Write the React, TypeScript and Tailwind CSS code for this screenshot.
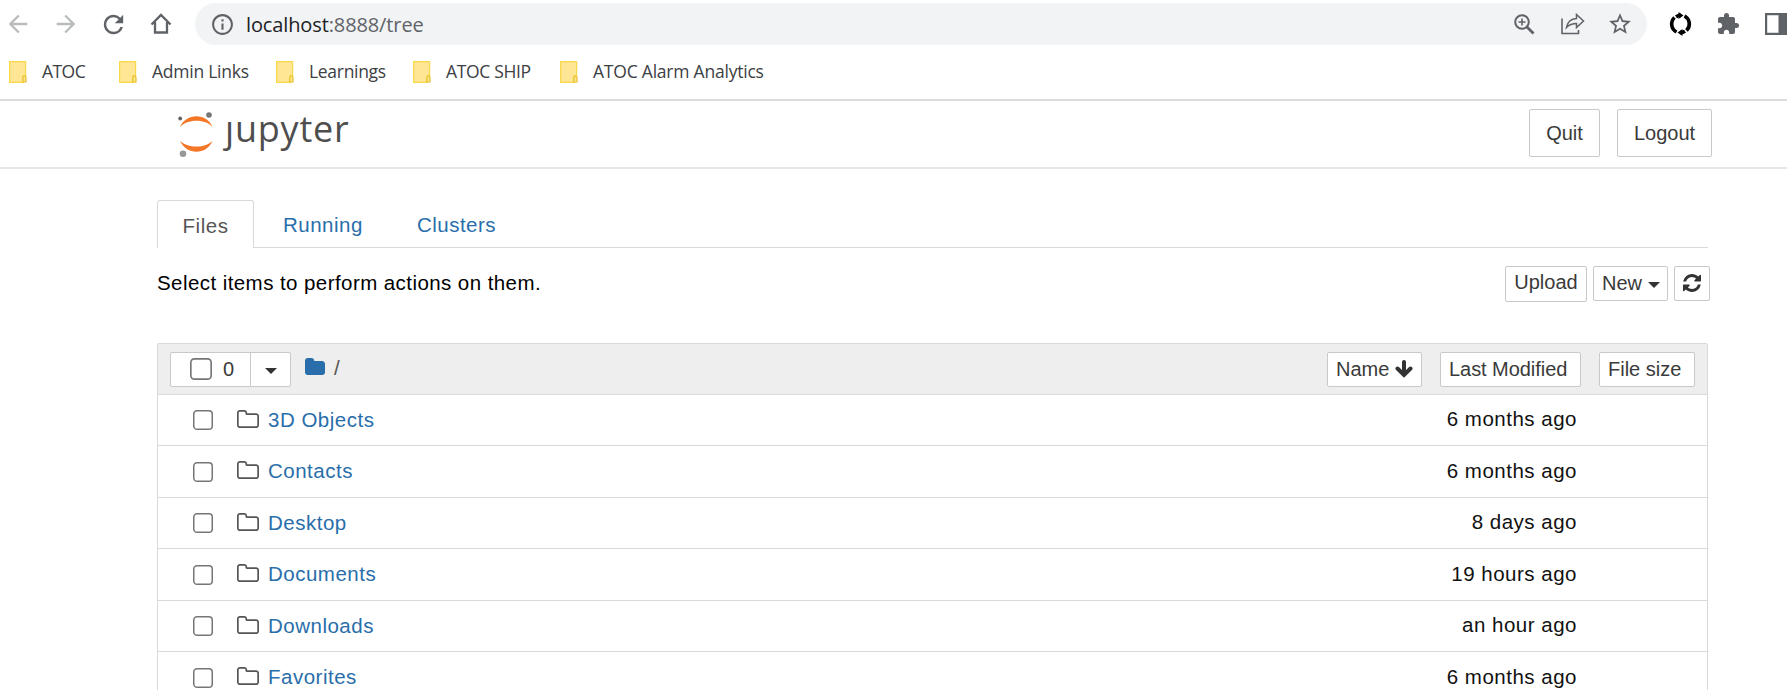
import type { ReactNode } from "react";
import { MdArrowBack, MdArrowForward, MdExtension, MdInfoOutline, MdRefresh, MdStarOutline } from "react-icons/md";

const FOLDER =
  "M1664 608v704q0 92-66 158t-158 66h-1216q-92 0-158-66t-66-158v-960q0-92 66-158t158-66h320q92 0 158 66t66 158v32h672q92 0 158 66t66 158z";
const FOLDER_O =
  "M1536 1312v-704q0-40-28-68t-68-28h-704q-40 0-68-28t-28-68v-64q0-40-28-68t-68-28h-320q-40 0-68 28t-28 68v960q0 40 28 68t68 28h1216q40 0 68-28t28-68zm128-704v704q0 92-66 158t-158 66h-1216q-92 0-158-66t-66-158v-960q0-92 66-158t158-66h320q92 0 158 66t66 158v32h672q92 0 158 66t66 158z";
const REFRESH =
  "M1639 1056q0 5-1 7-64 268-268 434.5t-478 166.5q-146 0-282.5-55t-243.5-157l-129 129q-19 19-45 19t-45-19-19-45v-448q0-26 19-45t45-19h448q26 0 45 19t19 45-19 45l-137 137q71 66 161 102t187 36q134 0 250-65t186-179q11-17 53-117 8-23 30-23h192q13 0 22.5 9.5t9.5 22.5zm25-800v448q0 26-19 45t-45 19h-448q-26 0-45-19t-19-45 19-45l138-138q-148-137-349-137-134 0-250 65t-186 179q-11 17-53 117-8 23-30 23h-199q-13 0-22.5-9.5t-9.5-22.5v-7q65-268 270-434.5t480-166.5q146 0 284 55.5t245 156.5l130-129q19-19 45-19t45 19 19 45z";

const bookmarks = [
  { label: "ATOC", box: "w-[110px]", text: "tracking-[-0.55px]" },
  { label: "Admin Links", box: "w-[157px]", text: "tracking-[-0.25px]" },
  { label: "Learnings", box: "w-[137px]", text: "tracking-[-0.3px]" },
  { label: "ATOC SHIP", box: "w-[147px]", text: "tracking-[-0.35px]" },
  { label: "ATOC Alarm Analytics", box: "w-[220px]", text: "tracking-[-0.22px]" },
];

const files = [
  { name: "3D Objects", modified: "6 months ago", h: "h-[51px]" },
  { name: "Contacts", modified: "6 months ago", h: "h-[52px]" },
  { name: "Desktop", modified: "8 days ago", h: "h-[51px]" },
  { name: "Documents", modified: "19 hours ago", h: "h-[52px]" },
  { name: "Downloads", modified: "an hour ago", h: "h-[51px]" },
  { name: "Favorites", modified: "6 months ago", h: "h-[52px]" },
];

function BookmarkIcon() {
  return (
    <svg className="h-[22px] w-[18px] shrink-0" viewBox="0 0 18 22">
      <path d="M.6.6h16v14.2h-2.200v6.600H.6z" fill="#ffe694" stroke="#fbd84b" strokeWidth="1.2" />
      <path d="M13.800 21V16.400q0-1.600 1.600-1.600t1.600 1.600V21z" fill="#fde68a" stroke="#e9c02c" strokeWidth="1.2" />
    </svg>
  );
}

function Button({ className, children }: { className: string; children: ReactNode }) {
  return (
    <button className={`flex shrink-0 items-center whitespace-nowrap rounded-[2px] border border-[#c9c9c9] bg-white text-[20px] leading-none text-[#3a3a3a] ${className}`}>
      {children}
    </button>
  );
}

function Caret() {
  return (
    <svg className="h-[6px] w-[12px]" viewBox="0 0 12 6">
      <path d="M0 0h12L6 6z" fill="#333" />
    </svg>
  );
}

function Checkbox({ className }: { className: string }) {
  return (
    <svg className={`shrink-0 ${className}`} viewBox="0 0 20 20">
      <rect x="0.75" y="0.75" width="18.500" height="18.500" rx="3.300" fill="#fff" stroke="#767676" strokeWidth="1.500" />
    </svg>
  );
}

function Toolbar() {
  return (
    <div className="flex h-[48px] shrink-0 items-start pl-[5px] pt-[3px] text-[#5f6368]">
      <div className="flex h-[42px] w-[190px] shrink-0 items-center">
        <MdArrowBack className="-ml-px size-[28px] text-[#b9bbbd]" />
        <MdArrowForward className="ml-[20px] size-[28px] text-[#b9bbbd]" />
        <MdRefresh className="ml-[19px] size-[29px]" />
        <svg className="ml-[22px] size-[22px]" viewBox="0 0 22 22">
          <path d="M1.500 11.500 11 2l9.500 9.500M5 9v10.500h12V9" fill="none" stroke="currentColor" strokeWidth="2.300" />
        </svg>
      </div>
      <div className="flex h-[42px] w-[1452px] shrink-0 items-center rounded-full bg-[#f1f3f4] pl-[15px]">
        <MdInfoOutline className="size-[25px]" />
        <span className="ml-[11px] whitespace-nowrap pt-[1px] font-['Open_Sans',sans-serif] text-[20px] tracking-[-0.12px] text-[#5f6368]">
          <span className="text-[#202124]">localhost</span>:8888/tree
        </span>
        <span className="grow" />
        <svg className="mr-[2px] size-[21px]" viewBox="0 0 21 21">
          <circle cx="8" cy="8" r="6.800" fill="none" stroke="currentColor" strokeWidth="2" />
          <path d="M4.500 8h7M8 4.500v7" stroke="currentColor" strokeWidth="1.600" />
          <path d="M13 13l6.500 6.500" stroke="currentColor" strokeWidth="2.800" />
        </svg>
        <svg className="ml-[24px] h-[22px] w-[24px]" viewBox="0 0 24 22">
          <path d="M1 5.500V20.500H17.500V17" fill="none" stroke="currentColor" strokeWidth="1.600" />
          <path d="M15.500 1.500 22.500 8l-7 6.500v-4Q9.500 10.500 5.500 14.500 7 6 15.500 5.500z" fill="none" stroke="currentColor" strokeWidth="1.500" />
        </svg>
        <MdStarOutline className="ml-[22px] mr-[14px] size-[26px]" />
      </div>
      <div className="flex h-[42px] shrink-0 items-center">
        <svg className="ml-[22px] h-[24px] w-[23px]" viewBox="0 0 23 24">
          <path d="M7.500 20A9 9 0 0 1 5.500 5.500M7 4.700q2-1.300 5-1.300M15.500 4A9 9 0 0 1 17.500 18.500M16 19.300q-2 1.300-5 1.300" fill="none" stroke="#000" strokeWidth="3.600" />
          <path d="M9.500 0 14.500 3.500 9.500 7zM13.500 17v7L8.500 20.500z" fill="#000" />
        </svg>
        <MdExtension className="ml-[24px] size-[24px]" />
        <svg className="ml-[25px] h-[22px] w-[25px] shrink-0" viewBox="0 0 25 22">
          <path d="M1 1h23v20H1z" fill="#fff" stroke="#5f6368" strokeWidth="2.400" />
          <path d="M13.500 1H24v20H13.500z" fill="#5f6368" />
        </svg>
      </div>
    </div>
  );
}

function JupyterLogo() {
  return (
    <div className="flex h-[54px] items-start">
      <svg className="h-[48px] w-[36px]" viewBox="0 0 36 48">
        <path d="M2 18C8 3.500 29 3.500 34.500 18 28 9.500 9 9.500 2 18z" fill="#f37726" />
        <path d="M2 31.500C8 46.500 29 46.500 34.500 31.500 28 39.500 9 39.500 2 31.500z" fill="#f37726" />
        <circle cx="31" cy="6" r="2.800" fill="#767677" />
        <circle cx="2.200" cy="9.500" r="1.900" fill="#616262" />
        <circle cx="5" cy="44.700" r="3.300" fill="#989798" />
      </svg>
      <span className="ml-[11px] mt-[-4px] font-['Open_Sans',sans-serif] text-[36px] leading-[48px] tracking-[0.8px] text-[#4e4e4e]">ȷupyter</span>
    </div>
  );
}

export default function App() {
  return (
    <div className="flex h-[690px] w-[1787px] flex-col overflow-hidden bg-white font-['Liberation_Sans',Arial,sans-serif]">
      <Toolbar />
      <div className="flex h-[53px] shrink-0 items-start border-b-2 border-[#dcdcdc] pl-[9px] pt-[13px]">
        {bookmarks.map((b) => (
          <div key={b.label} className={`flex h-[22px] shrink-0 items-center ${b.box}`}>
            <BookmarkIcon />
            <span className={`ml-[15px] whitespace-nowrap font-['Open_Sans',sans-serif] text-[17.5px] leading-none text-[#3c4043] ${b.text}`}>{b.label}</span>
          </div>
        ))}
      </div>

      <header className="flex h-[68px] shrink-0 items-start justify-between border-b-2 border-[#e7e7e7] pl-[178px] pr-[75px] pt-[8px]">
        <JupyterLogo />
        <div className="flex gap-[17px]">
          <Button className="h-[48px] w-[71px] justify-center">Quit</Button>
          <Button className="h-[48px] w-[95px] justify-center">Logout</Button>
        </div>
      </header>

      <main className="flex w-[1708px] shrink-0 flex-col pl-[157px] pt-[31px]">
        <nav className="flex h-[48px] items-stretch border-b border-[#d9d9d9] text-[20.5px] tracking-[0.5px] text-[#296eaa]">
          <span className="-mb-px flex w-[97px] items-center justify-center rounded-t-[3px] border border-b-0 border-[#d9d9d9] bg-white pt-[3px] text-[#555]">Files</span>
          <span className="ml-[29px] flex items-center pt-[4px]">Running</span>
          <span className="ml-[54px] flex items-center pt-[4px]">Clusters</span>
        </nav>

        <div className="mr-[-2px] flex h-[95px] items-start justify-between pt-[18px]">
          <p className="text-[20.5px] leading-[33px] tracking-[0.43px] text-black">Select items to perform actions on them.</p>
          <div className="flex gap-[6px]">
            <Button className="h-[36px] w-[82px] justify-center pb-[4px]">Upload</Button>
            <Button className="h-[35px] w-[75px] gap-[6px] pb-[2px] pl-[8px]">
              New
              <span className="pt-[4px]">
                <Caret />
              </span>
            </Button>
            <Button className="h-[35px] w-[36px] justify-center pb-[1px]">
              <svg className="size-[18px]" viewBox="128 128 1536 1536">
                <path d={REFRESH} fill="#333" />
              </svg>
            </Button>
          </div>
        </div>

        <section className="rounded-t-[2px] border border-[#d9d9d9]">
          <div className="flex h-[51px] items-start border-b border-[#d9d9d9] bg-[#eeeeee] pl-[12px] pr-[12px] pt-[8px]">
            <Button className="h-[35px] w-[81px] rounded-r-none pb-[1px] pl-[19px]">
              <Checkbox className="size-[22px]" />
              <span className="ml-[11px] pb-[1px]">0</span>
            </Button>
            <Button className="-ml-px h-[35px] w-[41px] justify-center rounded-l-none pt-[3px]">
              <Caret />
            </Button>
            <svg className="ml-[14px] mt-[6px] h-[17px] w-[20px]" viewBox="0 128 1664 1408" preserveAspectRatio="none">
              <path d={FOLDER} fill="#296eaa" />
            </svg>
            <span className="ml-[9px] mt-[5px] text-[20.5px] leading-[22px] text-[#555]">/</span>
            <span className="grow" />
            <Button className="h-[35px] w-[95px] pb-[2px] pl-[8px]">
              Name
              <svg className="ml-[6px] size-[18px]" viewBox="0 0 18 18">
                <path d="M9 2v13M2.500 8.500 9 15l6.500-6.500" fill="none" stroke="#333" strokeWidth="4" strokeLinejoin="miter" strokeLinecap="round" />
              </svg>
            </Button>
            <Button className="ml-[18px] h-[35px] w-[141px] pb-[2px] pl-[8px] tracking-[-0.05px]">Last Modified</Button>
            <Button className="ml-[18px] h-[35px] w-[96px] pb-[2px] pl-[8px]">File size</Button>
          </div>
          {files.map((f) => (
            <div key={f.name} className={`flex items-center border-b border-[#d9d9d9] pl-[35px] pr-[130px] text-[20.5px] tracking-[0.5px] ${f.h}`}>
              <Checkbox className="size-[20px]" />
              <svg className="mb-[3px] ml-[24px] h-[18px] w-[22px]" viewBox="0 128 1664 1408" preserveAspectRatio="none">
                <path d={FOLDER_O} fill="#555" />
              </svg>
              <a className="ml-[9px] grow text-[#296eaa]">{f.name}</a>
              <span className="mb-[1px] text-[#111]">{f.modified}</span>
            </div>
          ))}
        </section>
      </main>
    </div>
  );
}
